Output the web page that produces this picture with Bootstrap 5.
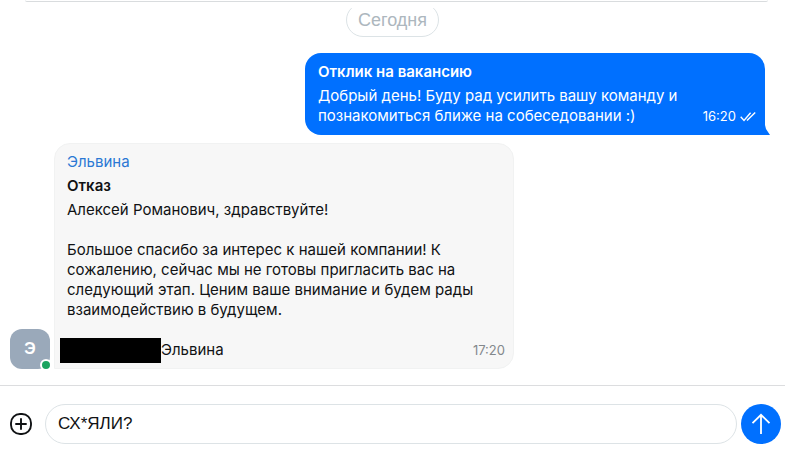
<!DOCTYPE html>
<html lang="ru">
<head>
<meta charset="utf-8">
<meta name="viewport" content="width=device-width, initial-scale=1">
<title>Чат</title>
<link href="https://cdn.jsdelivr.net/npm/bootstrap@5.3.0/dist/css/bootstrap.min.css" rel="stylesheet">
<style>
body { font-family: Inter, "Liberation Sans", sans-serif; font-size: 15px; line-height: 20px; color: #101214; }
.chat-head { z-index: 1; height: 8px; padding: 0 17px 0 25px; }
.pinned-edge { height: 2px; border-bottom: 1px solid #d9dcde; border-radius: 0 0 8px 8px; }
.messages { padding: 16px 20px 16px 10px; gap: 8px; }
.day-chip { margin-top: -5px; padding: 5px 11px; border: 1px solid #dce3e6; border-radius: 17px; font-size: 18px; line-height: 22px; color: #adb7be; }
.day-chip, .message-box, .avatar { font-family: "Liberation Sans", Arial, sans-serif; }
.title-line { font-weight: 600; }
.bubble { width: 460px; max-width: 100%; padding: 9px 9px 9px 13px; border-radius: 16px; }
.bubble-out { background: #0070ff; border-bottom-right-radius: 0; }
.bubble-in { background: #f7f7f7; border: 1px solid #f1f2f2; padding: 8px 8px 8px 12px; border-bottom-left-radius: 0; }
.tail { right: -5px; bottom: 0; }
.sender { color: #2b78d4; }
.stamp { font-size: 13px; color: #83888c; }
.stamp-out { gap: 4px; font-size: 13px; }
.avatar { width: 40px; height: 40px; border-radius: 12px; background: #9aa9ba; font-size: 16px; }
.online { right: -2px; bottom: -2px; width: 12px; height: 12px; border: 2px solid #fff; background: #1aa35f; }
.signature { height: 20px; margin-top: 20px; }
.redacted { width: 101px; height: 25px; margin-left: -7px; background: #000; }
.composer { padding: 18px 4px 13px 10px; border-top: 1px solid #dcdddf; gap: 4px; }
.btn-add { width: 22px; height: 22px; margin-right: 9px; }
.message-box { height: 40px; border: 1px solid #dde3e6; border-radius: 20px; padding: 0 12px; font-size: 17px; color: #101214; }
.btn-send { width: 40px; height: 40px; background: #0070ff; }
</style>
</head>
<body class="bg-white d-flex flex-column min-vh-100">
<header class="chat-head position-relative bg-white"><div class="pinned-edge"></div></header>
<main class="flex-grow-1 d-flex flex-column">
  <div class="day-chip align-self-center">Сегодня</div>

  <div class="messages d-flex flex-column">
    <article class="bubble bubble-out position-relative align-self-end text-white">
      <div class="title-line mb-1">Отклик на вакансию</div>
      <div class="d-flex align-items-end justify-content-between">
        <div>Добрый день! Буду рад усилить вашу команду и<br>познакомиться ближе на собеседовании :)</div>
        <div class="stamp-out d-flex align-items-center"><time>16:20</time>
          <svg width="16" height="12" viewBox="0 0 16 12" fill="none" stroke="#fff" stroke-width="1.4" aria-label="Прочитано"><path d="M.7 6.8 4 10.4 10.6 2.8M7 10.4 15.2 2.4"/></svg>
        </div>
      </div>
      <svg class="tail position-absolute" width="5" height="10" viewBox="0 0 5 10" fill="#0070ff" aria-hidden="true"><path d="M0 0V10H5L1 4Z"/></svg>
    </article>

    <div class="d-flex align-items-end gap-1">
      <div class="avatar position-relative flex-shrink-0 d-flex align-items-center justify-content-center text-white fw-bold">Э<span class="online position-absolute rounded-circle"></span></div>
      <article class="bubble bubble-in">
        <div class="sender mb-1">Эльвина</div>
        <div class="title-line mb-1">Отказ</div>
        <div>Алексей Романович, здравствуйте!<br><br>Большое спасибо за интерес к нашей компании! К<br>сожалению, сейчас мы не готовы пригласить вас на<br>следующий этап. Ценим ваше внимание и будем рады<br>взаимодействию в будущем.</div>
        <div class="signature d-flex align-items-center"><span class="redacted"></span><span>Эльвина</span><time class="stamp ms-auto">17:20</time></div>
      </article>
    </div>
  </div>
</main>

<form class="composer d-flex align-items-center">
  <button type="button" class="btn-add btn p-0 border-0 d-flex flex-shrink-0" aria-label="Прикрепить">
    <svg width="22" height="22" viewBox="0 0 22 22" fill="none" stroke="#101214" stroke-width="1.9"><rect x="1" y="1" width="20" height="20" rx="9"/><path stroke-linecap="round" d="M11 6v10M6 11h10"/></svg>
  </button>
  <input type="text" class="message-box form-control" aria-label="Сообщение" value="СХ*ЯЛИ?">
  <button type="submit" class="btn-send btn rounded-circle border-0 p-0 flex-shrink-0 d-flex align-items-center justify-content-center" aria-label="Отправить">
    <svg width="20" height="22" viewBox="0 0 20 22" fill="none" stroke="#fff" stroke-width="1.8"><path d="M10 21V2M1.5 10.2 10 1.8 18.5 10.2"/></svg>
  </button>
</form>
<script src="https://cdn.jsdelivr.net/npm/bootstrap@5.3.0/dist/js/bootstrap.bundle.min.js"></script>
</body>
</html>
